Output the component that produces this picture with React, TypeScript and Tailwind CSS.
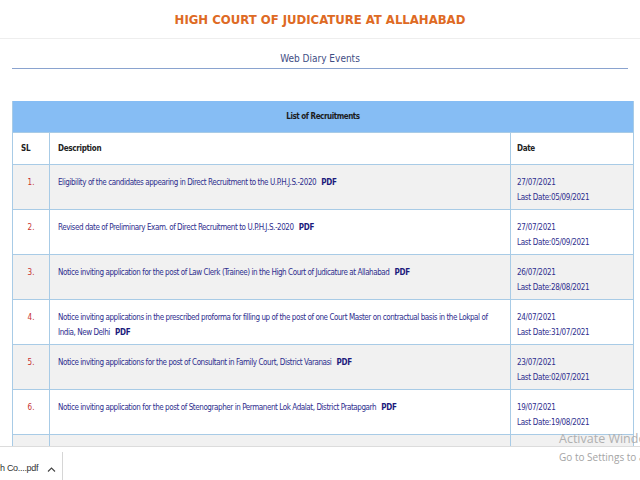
import React from "react";

const rows = [
  {
    sl: "1.",
    desc: ["Eligibility of the candidates appearing in Direct Recruitment to the U.P.H.J.S.-2020"],
    date: "27/07/2021",
    last: "Last Date:05/09/2021",
  },
  {
    sl: "2.",
    desc: ["Revised date of Preliminary Exam. of Direct Recruitment to U.P.H.J.S.-2020"],
    date: "27/07/2021",
    last: "Last Date:05/09/2021",
  },
  {
    sl: "3.",
    desc: ["Notice inviting application for the post of Law Clerk (Trainee) in the High Court of Judicature at Allahabad"],
    date: "26/07/2021",
    last: "Last Date:28/08/2021",
  },
  {
    sl: "4.",
    desc: [
      "Notice inviting applications in the prescribed proforma for filling up of the post of one Court Master on contractual basis in the Lokpal of",
      "India, New Delhi",
    ],
    date: "24/07/2021",
    last: "Last Date:31/07/2021",
  },
  {
    sl: "5.",
    desc: ["Notice inviting applications for the post of Consultant in Family Court, District Varanasi"],
    date: "23/07/2021",
    last: "Last Date:02/07/2021",
  },
  {
    sl: "6.",
    desc: ["Notice inviting application for the post of Stenographer in Permanent Lok Adalat, District Pratapgarh"],
    date: "19/07/2021",
    last: "Last Date:19/08/2021",
  },
];

const cond = { fontFamily: '"DejaVu Sans Condensed", "DejaVu Sans", sans-serif' };

export default function App() {
  return (
    <div className="relative w-[640px] h-[480px] overflow-hidden bg-white" style={cond}>
      <div className="h-[39px] flex items-center justify-center border-b border-[#eeeeee]">
        <span className="text-[13px] font-bold text-[#de6a24] leading-none pt-[1px]">HIGH COURT OF JUDICATURE AT ALLAHABAD</span>
      </div>
      <div className="mx-[12px] h-[30px] border-b border-[#8aa3cf] flex justify-center pt-[13px]">
        <span className="text-[10px] leading-[13px] text-[#3f4d84]">Web Diary Events</span>
      </div>
      <div className="mt-[32px] mx-[12px] w-[622px] border-l border-r border-[#a8cbe6]">
        <div className="h-[32px] bg-[#86bdf4] border-b border-[#a8cbe6] flex items-center justify-center">
          <span className="text-[8px] font-bold tracking-[-0.45px] text-[#1c1c1c]">List of Recruitments</span>
        </div>
        <div className="h-[32px] flex border-b border-[#a8cbe6] text-[8px] tracking-[-0.3px] font-bold text-[#222]">
          <div className="w-[37px] border-r border-[#a8cbe6] flex items-center pl-[8px]">SL</div>
          <div className="w-[461px] border-r border-[#a8cbe6] flex items-center pl-[8px]">Description</div>
          <div className="flex-1 flex items-center pl-[6px]">Date</div>
        </div>
        {rows.map((r, i) => (
          <div
            key={r.sl}
            className={`h-[45px] flex border-b border-[#a8cbe6] text-[8px] leading-[15px] ${i % 2 === 0 ? "bg-[#f1f1f1]" : "bg-white"}`}
          >
            <div className="w-[37px] border-r border-[#a8cbe6] text-center pt-[10px] text-[#c8322e]">{r.sl}</div>
            <div className="w-[461px] border-r border-[#a8cbe6] pl-[8px] pt-[10px] text-[#2e2e8e] tracking-[-0.43px] whitespace-nowrap">
              {r.desc.map((d, j) => (
                <div key={j}>
                  {d}
                  {j === r.desc.length - 1 && <span className="font-bold text-[#1b1b7c] ml-[5px] tracking-[-0.2px]">PDF</span>}
                </div>
              ))}
            </div>
            <div className="flex-1 pl-[6px] pt-[10px] text-[#2e2e8e] tracking-[-0.3px] whitespace-nowrap">
              <div>{r.date}</div>
              <div>{r.last}</div>
            </div>
          </div>
        ))}
        <div className="h-[45px] flex bg-[#f1f1f1]">
          <div className="w-[37px] border-r border-[#a8cbe6]" />
          <div className="w-[461px] border-r border-[#a8cbe6]" />
          <div className="flex-1" />
        </div>
      </div>

      {/* download bar */}
      <div className="absolute left-0 right-0 bottom-0 h-[34px] bg-white border-t border-[#dcdcdc] flex items-end">
        <div className="h-[28px] w-[63px] border-r border-[#d6d6d6] flex items-center whitespace-nowrap pt-[6px]">
          <span className="text-[9px] tracking-[-0.3px] text-[#333]" style={{ fontFamily: '"Liberation Sans", sans-serif' }}>h Co....pdf</span>
          <svg className="ml-[9px] shrink-0" width="9" height="7" viewBox="0 0 9 7">
            <path d="M1 5.5 L4.5 2 L8 5.5" fill="none" stroke="#444" strokeWidth="1.1" />
          </svg>
        </div>
      </div>

      {/* watermark */}
      <div className="absolute left-[559px] top-[431px] whitespace-nowrap pointer-events-none" style={{ fontFamily: '"Open Sans", "Liberation Sans", sans-serif' }}>
        <div className="text-[12.5px] leading-[16px] text-[#b0b0b0]">Activate Windows</div>
        <div className="text-[10px] leading-[14px] text-[#a4a4a4] mt-[3px]">Go to Settings to activate Windows.</div>
      </div>
    </div>
  );
}
